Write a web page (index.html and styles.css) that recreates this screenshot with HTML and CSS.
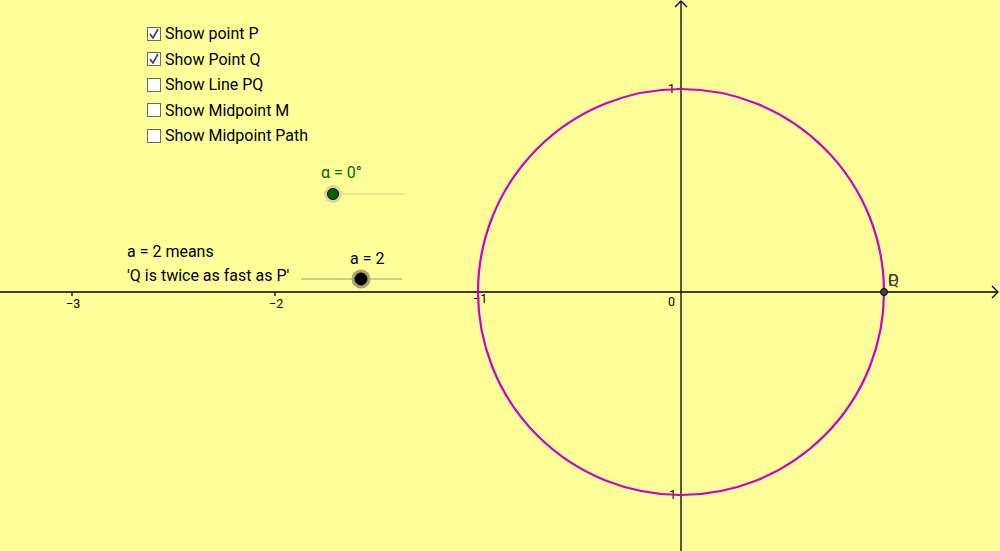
FILE: index.html
```html
<!DOCTYPE html>
<html>
<head>
<meta charset="utf-8">
<link rel="stylesheet" href="styles.css">
</head>
<body>
<div class="applet">
  <svg class="graph" width="1000" height="551" viewBox="0 0 1000 551" xmlns="http://www.w3.org/2000/svg">
    <!-- axes -->
    <g class="axis">
      <line x1="0" y1="292" x2="998" y2="292"/>
      <polyline points="992,286 998,292 992,298"/>
      <line x1="681" y1="1" x2="681" y2="551"/>
      <polyline points="675,7 681,1 687,7"/>
      <line x1="72" y1="292" x2="72" y2="296"/>
      <line x1="275" y1="292" x2="275" y2="296"/>
      <line x1="478" y1="292" x2="478" y2="296"/>
      <line x1="884" y1="292" x2="884" y2="296"/>
      <line x1="677" y1="89" x2="681" y2="89"/>
      <line x1="677" y1="495" x2="681" y2="495"/>
    </g>
    <g class="ticklabel">
      <text x="66" y="308">−3</text>
      <text x="269" y="308">−2</text>
      <text x="473" y="303">−1</text>
      <text x="668" y="306">0</text>
      <text x="668" y="93">1</text>
      <text x="662" y="499">−1</text>
    </g>
    <!-- circle -->
    <circle class="unit" cx="681" cy="292" r="203"/>
    <!-- points P, Q -->
    <circle class="pt" cx="884" cy="292" r="3.5"/>
    <text class="ptlabel" x="888" y="286">P</text>
    <text class="ptlabel" x="888" y="286">Q</text>
    <!-- alpha slider -->
    <text class="alpha" x="321" y="178">α = 0°</text>
    <line class="track-a" x1="333" y1="194" x2="405" y2="194"/>
    <circle class="halo-g" cx="333" cy="194" r="9"/>
    <circle class="knob-g" cx="333" cy="194" r="5.5"/>
    <!-- a slider -->
    <text class="lbl" x="127" y="257">a = 2 means</text>
    <text class="lbl" x="127" y="281">'Q is twice as fast as P'</text>
    <text class="lbl" x="350" y="264">a = 2</text>
    <line class="track-b" x1="301" y1="279" x2="402" y2="279"/>
    <circle class="halo-b" cx="361" cy="279" r="9.5"/>
    <circle class="knob-b" cx="361" cy="279" r="6"/>
  </svg>

  <ul class="checks">
    <li class="check"><span class="box on"><svg width="12" height="12" viewBox="0 0 12 12"><polyline points="2,6 5,10 10,1"/></svg></span>Show point P</li>
    <li class="check"><span class="box on"><svg width="12" height="12" viewBox="0 0 12 12"><polyline points="2,6 5,10 10,1"/></svg></span>Show Point Q</li>
    <li class="check"><span class="box"></span>Show Line PQ</li>
    <li class="check"><span class="box"></span>Show Midpoint M</li>
    <li class="check"><span class="box"></span>Show Midpoint Path</li>
  </ul>
</div>
</body>
</html>
```

FILE: styles.css
```css
html, body {
  margin: 0;
  padding: 0;
  background: #ffff99;
  overflow: hidden;
}
.applet {
  position: relative;
  width: 1000px;
  height: 551px;
  background: #ffff99;
  font-family: Roboto, "Liberation Sans", sans-serif;
}
.graph {
  display: block;
}
.axis line, .axis polyline {
  stroke: #000;
  stroke-width: 1.3;
  fill: none;
}
.ticklabel text {
  font-family: Roboto, "Liberation Sans", sans-serif;
  font-size: 12.5px;
  fill: #000;
}
.unit {
  fill: none;
  stroke: #cc00cc;
  stroke-width: 2.2;
}
.pt {
  fill: #444444;
  stroke: #000;
  stroke-width: 1;
}
.ptlabel {
  font-family: Roboto, "Liberation Sans", sans-serif;
  font-size: 16px;
  fill: #444433;
}
.alpha {
  font-family: Roboto, "Liberation Sans", sans-serif;
  font-size: 16px;
  fill: #006400;
}
.lbl {
  font-family: Roboto, "Liberation Sans", sans-serif;
  font-size: 16px;
  fill: #000;
}
.track-a {
  stroke: #d0d08a;
  stroke-width: 1.2;
}
.track-b {
  stroke: #a0a070;
  stroke-width: 1.2;
}
.halo-g {
  fill: #d8d890;
}
.knob-g {
  fill: #006400;
  stroke: #000;
  stroke-width: 1;
}
.halo-b {
  fill: #a8a470;
}
.knob-b {
  fill: #000;
  stroke: #000;
  stroke-width: 1;
}
.checks {
  position: absolute;
  left: 147px;
  top: 21px;
  margin: 0;
  padding: 0;
  list-style: none;
  display: flex;
  flex-direction: column;
  gap: 0;
}
.check {
  display: flex;
  align-items: center;
  height: 25.5px;
  font-size: 16px;
  color: #000;
  white-space: nowrap;
}
.box {
  width: 12px;
  height: 12px;
  border: 1px solid #6e6e50;
  background: #ffffff;
  margin-right: 4px;
  display: flex;
  align-items: center;
  justify-content: center;
  box-sizing: content-box;
}
.box svg polyline {
  fill: none;
  stroke: #444;
  stroke-width: 1.6;
}
```
